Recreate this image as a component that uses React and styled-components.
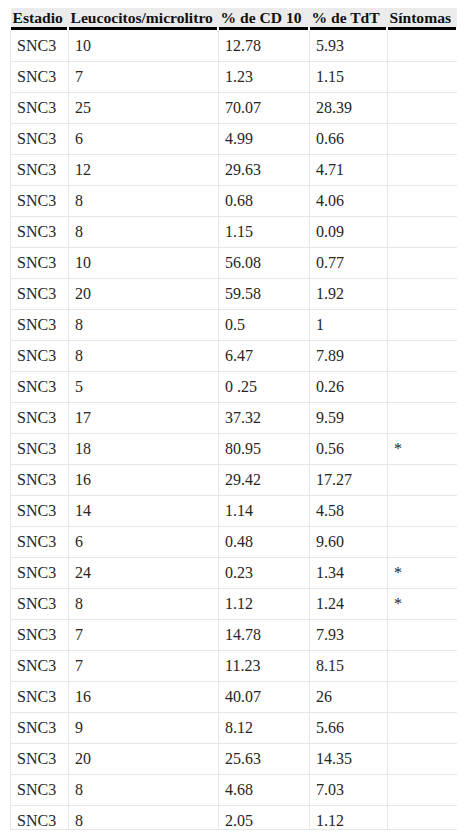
import React from "react";
import styled, { createGlobalStyle } from "styled-components";

const GlobalStyle = createGlobalStyle`
  html, body {
    margin: 0;
    padding: 0;
    background: #fff;
  }
`;

const rows = [
  ["SNC3", "10", "12.78", "5.93", ""],
  ["SNC3", "7", "1.23", "1.15", ""],
  ["SNC3", "25", "70.07", "28.39", ""],
  ["SNC3", "6", "4.99", "0.66", ""],
  ["SNC3", "12", "29.63", "4.71", ""],
  ["SNC3", "8", "0.68", "4.06", ""],
  ["SNC3", "8", "1.15", "0.09", ""],
  ["SNC3", "10", "56.08", "0.77", ""],
  ["SNC3", "20", "59.58", "1.92", ""],
  ["SNC3", "8", "0.5", "1", ""],
  ["SNC3", "8", "6.47", "7.89", ""],
  ["SNC3", "5", "0 .25", "0.26", ""],
  ["SNC3", "17", "37.32", "9.59", ""],
  ["SNC3", "18", "80.95", "0.56", "*"],
  ["SNC3", "16", "29.42", "17.27", ""],
  ["SNC3", "14", "1.14", "4.58", ""],
  ["SNC3", "6", "0.48", "9.60", ""],
  ["SNC3", "24", "0.23", "1.34", "*"],
  ["SNC3", "8", "1.12", "1.24", "*"],
  ["SNC3", "7", "14.78", "7.93", ""],
  ["SNC3", "7", "11.23", "8.15", ""],
  ["SNC3", "16", "40.07", "26", ""],
  ["SNC3", "9", "8.12", "5.66", ""],
  ["SNC3", "20", "25.63", "14.35", ""],
  ["SNC3", "8", "4.68", "7.03", ""],
  ["SNC3", "8", "2.05", "1.12", ""],
];

const headers = [
  "Estadio",
  "Leucocitos/microlitro",
  "% de CD 10",
  "% de TdT",
  "Síntomas",
];

const widths = [58, 150, 91, 78, 70];

const Page = styled.div`
  padding: 8px 10px 0;
`;

const Scroller = styled.div`
  width: 447px;
  height: 821px;
  overflow: hidden;
  border-bottom: 1px solid #e6e6e6;
`;

const Table = styled.table`
  width: 447px;
  table-layout: fixed;
  border-collapse: collapse;
  font-family: "Liberation Serif", "Times New Roman", serif;
  font-size: 16px;
  line-height: 18px;
`;

const Th = styled.th`
  text-align: left;
  font-weight: bold;
  font-size: 15.6px;
  color: #111;
  white-space: nowrap;
  padding: 1px 2px 1px 2px;
  border: 0;
  border-bottom: 3px solid transparent;
  background:
    linear-gradient(#000, #000) left bottom / calc(100% - 2px) 3px no-repeat border-box,
    linear-gradient(#ebebeb, #ebebeb) padding-box;
`;

const Td = styled.td`
  text-align: left;
  color: #262626;
  padding: 6px 6px;
  border: 1px solid #e6e6e6;
  white-space: nowrap;
`;

export default function App() {
  return (
    <Page>
      <GlobalStyle />
      <Scroller>
        <Table>
          <colgroup>
            {widths.map((w, i) => (
              <col key={i} style={{ width: w }} />
            ))}
          </colgroup>
          <thead>
            <tr>
              {headers.map((h) => (
                <Th key={h}>{h}</Th>
              ))}
            </tr>
          </thead>
          <tbody>
            {rows.map((r, i) => (
              <tr key={i}>
                {r.map((c, j) => (
                  <Td key={j}>{c}</Td>
                ))}
              </tr>
            ))}
          </tbody>
        </Table>
      </Scroller>
    </Page>
  );
}
